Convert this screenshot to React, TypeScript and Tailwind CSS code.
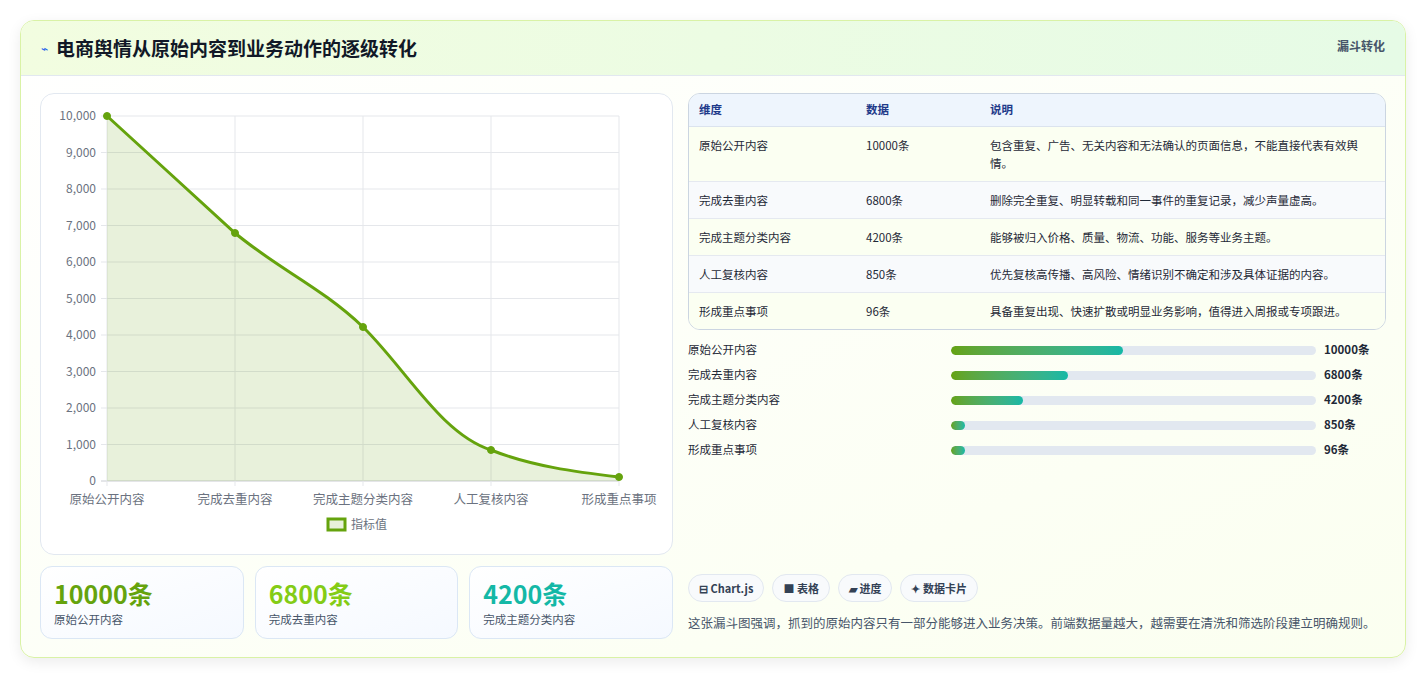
import React from "react";

const rows = [
  ["原始公开内容", "10000条", "包含重复、广告、无关内容和无法确认的页面信息，不能直接代表有效舆情。"],
  ["完成去重内容", "6800条", "删除完全重复、明显转载和同一事件的重复记录，减少声量虚高。"],
  ["完成主题分类内容", "4200条", "能够被归入价格、质量、物流、功能、服务等业务主题。"],
  ["人工复核内容", "850条", "优先复核高传播、高风险、情绪识别不确定和涉及具体证据的内容。"],
  ["形成重点事项", "96条", "具备重复出现、快速扩散或明显业务影响，值得进入周报或专项跟进。"],
];
const bars: [string, number, string][] = [
  ["原始公开内容", 172, "10000条"],
  ["完成去重内容", 117, "6800条"],
  ["完成主题分类内容", 72, "4200条"],
  ["人工复核内容", 14, "850条"],
  ["形成重点事项", 14, "96条"],
];

function Chart() {
  const ys = Array.from({ length: 11 }, (_, i) => 22 + i * 36.5);
  const xs = [66, 194, 322, 450, 578];
  const labels = ["原始公开内容", "完成去重内容", "完成主题分类内容", "人工复核内容", "形成重点事项"];
  const pts = [[66, 22], [194, 139], [322, 233], [450, 356], [578, 383]];
  const d = "M66,22 C109,61 151,100 194,139 C237,175 280,193 322,233 C365,275 400,340 450,356 C490,372 535,378 578,383";
  return (
    <svg width="632" height="459" className="block">
      {ys.map((y, i) => (
        <g key={i}>
          <line x1="60" x2="578" y1={y} y2={y} stroke={i === 10 ? "#c9ccd2" : "#e5e7eb"} />
          <text x="55" y={y + 4} textAnchor="end" fontSize="12" fill="#6b7280">
            {(10000 - i * 1000).toLocaleString("en-US")}
          </text>
        </g>
      ))}
      {xs.map((x, i) => (
        <g key={i}>
          <line x1={x} x2={x} y1="22" y2="392" stroke="#e5e7eb" />
          <text x={x} y="410" textAnchor="middle" fontSize="12.5" fill="#6b7280">{labels[i]}</text>
        </g>
      ))}
      <path d={d + " L578,387 L66,387 Z"} fill="rgba(101,163,13,0.15)" />
      <path d={d} fill="none" stroke="#65a30d" strokeWidth="3" />
      {pts.map(([x, y], i) => (
        <circle key={i} cx={x} cy={y} r="3.5" fill="#65a30d" stroke="#65a30d" />
      ))}
      <rect x="287" y="425" width="17" height="11" fill="rgba(101,163,13,0.15)" stroke="#65a30d" strokeWidth="3" />
      <text x="310" y="435" fontSize="12" fill="#6b7280">指标值</text>
    </svg>
  );
}

export default function App() {
  return (
    <div className="w-[1426px] h-[679px] bg-white p-[20px]" style={{ fontFamily: '"Noto Sans CJK SC", "Noto Sans", sans-serif' }}>
      <div className="h-[638px] rounded-[14px] border border-[#d9f2a6] shadow-[0_4px_14px_rgba(0,0,0,0.08)] bg-gradient-to-br from-[#ffffff] to-[#fbfff0] overflow-hidden">
        <div className="h-[55px] flex items-center justify-between px-[20px] bg-gradient-to-r from-[#f2fde0] to-[#e6fbe6] border-b border-[#e2e8f0]">
          <div className="flex items-center gap-[8px]">
            <span className="text-[#2563eb] text-[12px]">⌁</span>
            <span className="text-[19px] font-bold text-[#111827]">电商舆情从原始内容到业务动作的逐级转化</span>
          </div>
          <span className="text-[12px] font-bold text-[#475569] self-start mt-[16px]">漏斗转化</span>
        </div>
        <div className="flex gap-[15px] px-[19px] pt-[17px]">
          <div className="w-[633px] flex flex-col gap-[11px]">
            <div className="h-[462px] rounded-[14px] border border-[#e2e8f0] bg-white">
              <Chart />
            </div>
            <div className="grid grid-cols-3 gap-[11px]">
              {[["10000条", "text-[#65a30d]", "原始公开内容"], ["6800条", "text-[#84cc16]", "完成去重内容"], ["4200条", "text-[#14b8a6]", "完成主题分类内容"]].map(([v, c, l]) => (
                <div key={l} className="h-[73px] rounded-[12px] border border-[#dbe7f5] bg-gradient-to-br from-white to-[#f5f9ff] px-[13px] pt-[10px]">
                  <div className={`text-[25px] font-bold leading-[32px] ${c}`}>{v}</div>
                  <div className="text-[11.5px] text-[#475569] mt-[2px]">{l}</div>
                </div>
              ))}
            </div>
          </div>
          <div className="w-[700px] flex flex-col">
            <div className="rounded-[12px] border border-[#cbd5e1] overflow-hidden text-[11.5px] text-[#1f2937]">
              <div className="h-[33px] flex items-center bg-[#eef5fd] font-bold text-[#1e3a8a] border-b border-[#dbe3ee]">
                <div className="w-[177px] pl-[10px]">维度</div>
                <div className="w-[124px]">数据</div>
                <div>说明</div>
              </div>
              {rows.map((r, i) => (
                <div key={i} className={`flex py-[9px] leading-[18px] ${i < 4 ? "border-b border-[#e5e9f0]" : ""} ${i % 2 ? "bg-[#f8fafc]" : "bg-[#fbfff2]"}`}>
                  <div className="w-[177px] pl-[10px] shrink-0">{r[0]}</div>
                  <div className="w-[124px] shrink-0">{r[1]}</div>
                  <div className="pr-[6px]">{r[2]}</div>
                </div>
              ))}
            </div>
            <div className="mt-[11px] flex flex-col gap-[7px]">
              {bars.map(([l, w, v]) => (
                <div key={l} className="flex items-center h-[18px] text-[11.5px]">
                  <div className="w-[263px] text-[#1f2937]">{l}</div>
                  <div className="w-[365px] h-[9px] rounded-full bg-[#e2e8f0] overflow-hidden">
                    <div className="h-full rounded-full bg-gradient-to-r from-[#65a30d] to-[#14b8a6]" style={{ width: w }} />
                  </div>
                  <div className="ml-[8px] font-bold text-[#1f2937]">{v}</div>
                </div>
              ))}
            </div>
            <div className="mt-[115px] flex gap-[8px]">
              {["⊟ Chart.js", "■ 表格", "▰ 进度", "✦ 数据卡片"].map((t) => (
                <span key={t} className="h-[28px] px-[10px] flex items-center rounded-full border border-[#e2e8f0] bg-[#f8fafc] text-[11px] font-bold text-[#334155]">{t}</span>
              ))}
            </div>
            <p className="mt-[11px] text-[12.5px] leading-[20px] text-[#475569]">
              这张漏斗图强调，抓到的原始内容只有一部分能够进入业务决策。前端数据量越大，越需要在清洗和筛选阶段建立明确规则。
            </p>
          </div>
        </div>
      </div>
    </div>
  );
}
